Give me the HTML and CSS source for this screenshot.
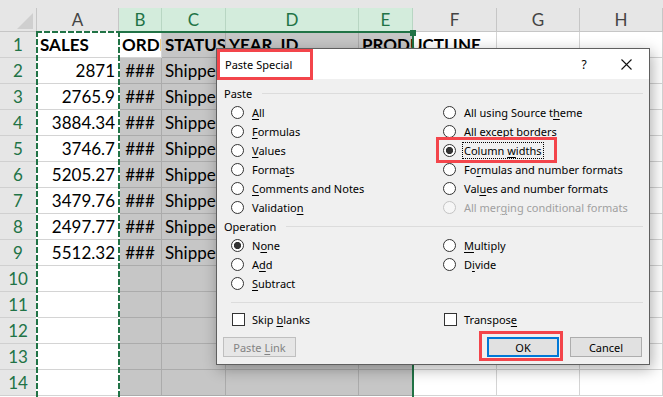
FILE: index.html
```html
<!DOCTYPE html>
<html>
<head>
<meta charset="utf-8">
<link rel="stylesheet" href="styles.css">
</head>
<body>
<div class="page">
  <div class="top"></div>
  <div class="grid">
    <div class="corner"><svg width="37" height="24" viewBox="0 0 37 24"><polygon points="33,5 33,21 17,21" fill="#cfcfcf"/></svg></div>
    <div class="ch">A</div><div class="ch sel">B</div><div class="ch sel">C</div><div class="ch sel">D</div><div class="ch sel">E</div><div class="ch">F</div><div class="ch">G</div><div class="ch">H</div>

    <div class="rh">1</div><div class="w bold">SALES</div><div class="w bold">ORDERNUMBER</div><div class="g bold">STATUS</div><div class="g bold">YEAR_ID</div><div class="g bold spill">PRODUCTLINE</div><div class="w clear"></div><div class="w"></div><div class="w"></div>
    <div class="rh">2</div><div class="w num">2871</div><div class="g mid">###</div><div class="g">Shipped</div><div class="g"></div><div class="g"></div><div class="w"></div><div class="w"></div><div class="w"></div>
    <div class="rh">3</div><div class="w num">2765.9</div><div class="g mid">###</div><div class="g">Shipped</div><div class="g"></div><div class="g"></div><div class="w"></div><div class="w"></div><div class="w"></div>
    <div class="rh">4</div><div class="w num">3884.34</div><div class="g mid">###</div><div class="g">Shipped</div><div class="g"></div><div class="g"></div><div class="w"></div><div class="w"></div><div class="w"></div>
    <div class="rh">5</div><div class="w num">3746.7</div><div class="g mid">###</div><div class="g">Shipped</div><div class="g"></div><div class="g"></div><div class="w"></div><div class="w"></div><div class="w"></div>
    <div class="rh">6</div><div class="w num">5205.27</div><div class="g mid">###</div><div class="g">Shipped</div><div class="g"></div><div class="g"></div><div class="w"></div><div class="w"></div><div class="w"></div>
    <div class="rh">7</div><div class="w num">3479.76</div><div class="g mid">###</div><div class="g">Shipped</div><div class="g"></div><div class="g"></div><div class="w"></div><div class="w"></div><div class="w"></div>
    <div class="rh">8</div><div class="w num">2497.77</div><div class="g mid">###</div><div class="g">Shipped</div><div class="g"></div><div class="g"></div><div class="w"></div><div class="w"></div><div class="w"></div>
    <div class="rh">9</div><div class="w num">5512.32</div><div class="g mid">###</div><div class="g">Shipped</div><div class="g"></div><div class="g"></div><div class="w"></div><div class="w"></div><div class="w"></div>
    <div class="rh">10</div><div class="w"></div><div class="g"></div><div class="g"></div><div class="g"></div><div class="g"></div><div class="w"></div><div class="w"></div><div class="w"></div>
    <div class="rh">11</div><div class="w"></div><div class="g"></div><div class="g"></div><div class="g"></div><div class="g"></div><div class="w"></div><div class="w"></div><div class="w"></div>
    <div class="rh">12</div><div class="w"></div><div class="g"></div><div class="g"></div><div class="g"></div><div class="g"></div><div class="w"></div><div class="w"></div><div class="w"></div>
    <div class="rh">13</div><div class="w"></div><div class="g"></div><div class="g"></div><div class="g"></div><div class="g"></div><div class="w"></div><div class="w"></div><div class="w"></div>
    <div class="rh">14</div><div class="w"></div><div class="g"></div><div class="g"></div><div class="g"></div><div class="g"></div><div class="w"></div><div class="w"></div><div class="w"></div>
  </div>

  <div class="ants"></div>
  <div class="selbox"></div>
  <div class="handle"></div>

  <div class="dialog">
    <div class="titlebar">
      <span class="title">Paste Special</span>
      <span class="help">?</span>
      <span class="close"><svg width="11" height="11" viewBox="0 0 11 11"><path d="M0.5 0.5 L10.5 10.5 M10.5 0.5 L0.5 10.5" stroke="#111" stroke-width="1.1" fill="none"/></svg></span>
    </div>
    <div class="body">
      <div class="legend"><span>Paste</span></div>
      <div class="opts">
        <div class="opt"><span class="radio"></span><span class="lbl"><u>A</u>ll</span></div>
        <div class="opt"><span class="radio"></span><span class="lbl">All using Source t<u>h</u>eme</span></div>
        <div class="opt"><span class="radio"></span><span class="lbl"><u>F</u>ormulas</span></div>
        <div class="opt"><span class="radio"></span><span class="lbl">All e<u>x</u>cept borders</span></div>
        <div class="opt"><span class="radio"></span><span class="lbl"><u>V</u>alues</span></div>
        <div class="opt"><span class="radio on"></span><span class="lbl focus">Column <u>w</u>idths</span></div>
        <div class="opt"><span class="radio"></span><span class="lbl">Forma<u>t</u>s</span></div>
        <div class="opt"><span class="radio"></span><span class="lbl">Fo<u>r</u>mulas and number formats</span></div>
        <div class="opt"><span class="radio"></span><span class="lbl"><u>C</u>omments and Notes</span></div>
        <div class="opt"><span class="radio"></span><span class="lbl">Val<u>u</u>es and number formats</span></div>
        <div class="opt"><span class="radio"></span><span class="lbl">Validatio<u>n</u></span></div>
        <div class="opt dis"><span class="radio"></span><span class="lbl">All mer<u>g</u>ing conditional formats</span></div>
      </div>
      <div class="legend"><span>Operation</span></div>
      <div class="opts">
        <div class="opt"><span class="radio on"></span><span class="lbl">N<u>o</u>ne</span></div>
        <div class="opt"><span class="radio"></span><span class="lbl"><u>M</u>ultiply</span></div>
        <div class="opt"><span class="radio"></span><span class="lbl">A<u>d</u>d</span></div>
        <div class="opt"><span class="radio"></span><span class="lbl">D<u>i</u>vide</span></div>
        <div class="opt"><span class="radio"></span><span class="lbl"><u>S</u>ubtract</span></div>
      </div>
      <div class="sep"></div>
      <div class="opts checks">
        <div class="opt"><span class="check"></span><span class="lbl">Skip <u>b</u>lanks</span></div>
        <div class="opt"><span class="check"></span><span class="lbl">Transpos<u>e</u></span></div>
      </div>
      <div class="buttons">
        <div class="btn disabled"><span>Paste <u>L</u>ink</span></div>
        <div class="btn ok"><span>OK</span></div>
        <div class="btn cancel"><span>Cancel</span></div>
      </div>
    </div>
  </div>

  <div class="mark m-title"></div>
  <div class="mark m-col"></div>
  <div class="mark m-ok"></div>
</div>
</body>
</html>
```

FILE: styles.css
```css
body {
  margin: 0;
  overflow: hidden;
  background: #fff;
}

.page {
  position: relative;
  width: 663px;
  height: 397px;
  overflow: hidden;
  font-family: Lato, "Liberation Sans", sans-serif;
}

.top {
  height: 8px;
  background: #e6e6e6;
}

.grid {
  display: grid;
  grid-template-columns: 37px 82px 43px 64px 133px 54px 84px 83px 83px;
  grid-template-rows: 24px repeat(14, 26px);
  background: #fff;
}

.grid > div {
  box-sizing: border-box;
  overflow: hidden;
  white-space: nowrap;
  font-size: 17px;
  line-height: 25px;
  color: #000;
}

.corner {
  background: #e6e6e6;
  border-right: 1px solid #c6c6c6;
  border-bottom: 1px solid #c6c6c6;
}

.corner svg {
  display: block;
}

.grid > .ch {
  background: #e6e6e6;
  border-right: 1px solid #c6c6c6;
  border-bottom: 1px solid #c6c6c6;
  text-align: center;
  line-height: 23px;
  color: #444;
}

.grid > .ch.sel {
  background: #d3ecdc;
  color: #217346;
  border-right-color: #b8d6c3;
}

.grid > .rh {
  background: #e6e6e6;
  border-right: 1px solid #c6c6c6;
  border-bottom: 1px solid #d0d0d0;
  text-align: center;
  color: #217346;
}

.w {
  background: #fff;
  border-right: 1px solid #d4d4d4;
  border-bottom: 1px solid #d4d4d4;
  padding: 0 3px;
}

.g {
  background: #c6c6c6;
  border-right: 1px solid #ababab;
  border-bottom: 1px solid #ababab;
  padding: 0 3px;
}

.bold {
  font-weight: 700;
}

.num {
  text-align: right;
}

.mid {
  text-align: center;
}

.grid > .spill {
  overflow: visible;
}

.w.clear {
  background: transparent;
}

/* copy marquee around column A */
.ants {
  position: absolute;
  left: 36px;
  top: 31px;
  width: 84px;
  height: 370px;
  background:
    repeating-linear-gradient(to bottom, #217346 0 6px, #fff 6px 8px) left top / 2px 100% no-repeat,
    repeating-linear-gradient(to bottom, #217346 0 6px, #fff 6px 8px) right top / 2px 100% no-repeat,
    repeating-linear-gradient(to right, #217346 0 6px, #fff 6px 8px) left top / 100% 2px no-repeat;
}

.selbox {
  position: absolute;
  left: 120px;
  top: 31px;
  width: 294px;
  height: 370px;
  box-sizing: border-box;
  border-top: 2px solid #217346;
  border-right: 2px solid #217346;
}

.handle {
  position: absolute;
  left: 410px;
  top: 30px;
  width: 6px;
  height: 6px;
  background: #217346;
}

/* dialog */
.dialog {
  position: absolute;
  left: 216px;
  top: 48px;
  width: 434px;
  height: 317px;
  box-sizing: border-box;
  border: 1px solid #5f5f5f;
  background: #f0f0f0;
  box-shadow: 2px 4px 14px rgba(0, 0, 0, 0.32);
  font-family: "Noto Sans", "Open Sans", sans-serif;
  font-size: 11px;
  color: #000;
}

.titlebar {
  height: 30px;
  background: #fff;
  display: flex;
  align-items: center;
  padding-left: 8px;
}

.title {
  flex: 1;
  font-size: 11px;
}

.help {
  font-size: 12px;
  width: 16px;
  text-align: center;
  margin-right: 29px;
}

.close {
  width: 11px;
  height: 11px;
  margin-right: 17px;
}

.close svg {
  display: block;
}

.body {
  padding: 5px 6px 0 7px;
}

.legend {
  display: flex;
  align-items: center;
  height: 19px;
}

.legend::after {
  content: "";
  flex: 1;
  height: 1px;
  background: #dcdcdc;
  margin-left: 10px;
}

.opts {
  display: grid;
  grid-template-columns: 212px 1fr;
  grid-auto-rows: 19px;
  padding-left: 7px;
}

.opt {
  display: flex;
  align-items: center;
  white-space: nowrap;
}

.radio {
  flex: none;
  width: 13px;
  height: 13px;
  box-sizing: border-box;
  border: 1px solid #333;
  border-radius: 50%;
  background: #fff;
}

.radio.on {
  background: radial-gradient(circle, #333 0 3.3px, #fff 3.9px);
}

.check {
  flex: none;
  width: 13px;
  height: 13px;
  box-sizing: border-box;
  border: 1px solid #333;
  background: #fff;
  margin-left: 1px;
}

.lbl {
  margin-left: 6px;
  border: 1px dotted transparent;
  padding: 0 1px;
  line-height: 15px;
}

.lbl.focus {
  border-color: #000;
}

u {
  text-decoration-thickness: 1px;
  text-underline-offset: 2px;
}

.dis .radio {
  border-color: #c4c4c4;
  background: #f6f6f6;
}

.dis .lbl {
  color: #a0a0a0;
}

.sep {
  height: 1px;
  background: #dcdcdc;
  margin: 9px 0 0 7px;
}

.checks {
  margin-top: 7px;
}

.checks .lbl {
  margin-left: 5px;
}

.buttons {
  display: flex;
  margin-top: 8px;
  height: 20px;
}

.btn {
  box-sizing: border-box;
  width: 72px;
  height: 20px;
  border: 1px solid #adadad;
  background: #e1e1e1;
  display: flex;
  align-items: center;
  justify-content: center;
  white-space: nowrap;
}

.btn.disabled {
  width: 73px;
  margin-left: -1px;
  border-color: #bfbfbf;
  background: #e6e6e6;
  color: #838383;
}

.btn.ok {
  margin-left: auto;
  border: 2px solid #0078d7;
}

.btn.cancel {
  margin-left: 11px;
  margin-right: 1px;
}

/* red annotation boxes */
.mark {
  position: absolute;
  box-sizing: border-box;
  border: 3px solid #f3454b;
}

.m-title {
  left: 217px;
  top: 49px;
  width: 96px;
  height: 31px;
}

.m-col {
  left: 436px;
  top: 137px;
  width: 121px;
  height: 26px;
}

.m-ok {
  left: 479px;
  top: 331px;
  width: 84px;
  height: 30px;
}
```
